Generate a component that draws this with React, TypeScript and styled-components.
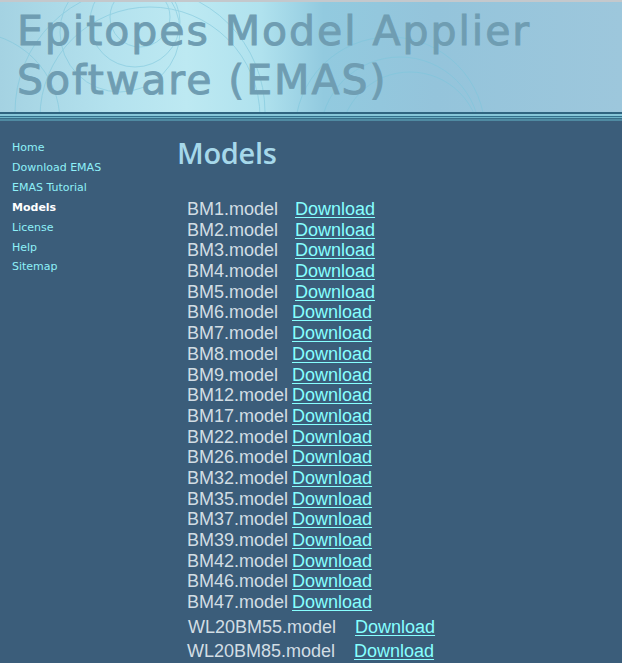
import { createGlobalStyle } from 'styled-components';
import styled from 'styled-components';

const GlobalStyle = createGlobalStyle`
  html, body {
    margin: 0;
    padding: 0;
    background: #3b5d7a;
  }
  body {
    font-family: "Liberation Sans", Arial, sans-serif;
  }
`;

const Page = styled.div`
  width: 622px;
  min-height: 663px;
  background: #3b5d7a;
  overflow: hidden;
`;

const TopEdge = styled.div`
  height: 2px;
  background: #c4c8cc;
`;

const Header = styled.header`
  position: relative;
  height: 110px;
  overflow: hidden;
  background: linear-gradient(
    90deg,
    #a4d2e2 0%,
    #b4e2ee 18%,
    #bde9f2 30%,
    #b0e2ee 42%,
    #92cadf 52%,
    #94c4db 70%,
    #9dc7dc 100%
  );
`;

const Swirls = styled.svg`
  position: absolute;
  inset: 0;
`;

const Title = styled.h1`
  position: relative;
  margin: 0;
  padding: 5px 0 0 17px;
  font-family: "DejaVu Sans", Verdana, sans-serif;
  font-weight: normal;
  font-size: 41px;
  line-height: 49px;
  letter-spacing: 1.95px;
  color: #6f9db2;
  -webkit-text-stroke: 0.9px #6f9db2;
`;

const Stripes = styled.div`
  height: 9px;
  background: linear-gradient(
    180deg,
    #2f6480 0px,
    #2f6480 2px,
    #86c6d8 2px,
    #86c6d8 4px,
    #33708c 4px,
    #33708c 5px,
    #6eb4c8 5px,
    #6eb4c8 6px,
    #3a6e88 6px,
    #3a6e88 7px,
    #4f8aa2 7px,
    #4f8aa2 9px
  );
`;

const Body = styled.div`
  display: flex;
`;

const Nav = styled.nav`
  width: 165px;
  padding: 17px 0 0 12px;
  display: flex;
  flex-direction: column;
`;

const NavLink = styled.a<{ $current?: boolean }>`
  font-family: "DejaVu Sans", Verdana, sans-serif;
  font-size: 11px;
  line-height: 19.9px;
  text-decoration: none;
  color: ${(p) => (p.$current ? '#ffffff' : '#8ef0f8')};
  font-weight: ${(p) => (p.$current ? 'bold' : 'normal')};
`;

const Main = styled.main`
  padding-top: 15px;
`;

const Heading = styled.h2`
  margin: 0 0 29px 0;
  font-family: "Open Sans", sans-serif;
  font-weight: 600;
  font-size: 29px;
  line-height: 34px;
  letter-spacing: -0.3px;
  color: #a6d8ea;
`;

const Group = styled.div<{ $rowHeight: number; $top?: number }>`
  display: flex;
  flex-direction: column;
  margin-top: ${(p) => p.$top ?? 0}px;

  & > div {
    height: ${(p) => p.$rowHeight}px;
  }
`;

const Row = styled.div<{ $nameWidth: number; $indent: number }>`
  display: grid;
  grid-template-columns: ${(p) => p.$nameWidth}px auto;
  padding-left: ${(p) => p.$indent}px;
  font-size: 18px;
  line-height: 20.7px;
  white-space: nowrap;
`;

const Name = styled.span`
  color: #d2dde4;
`;

const Download = styled.a`
  color: #86ffff;
  text-decoration: underline;
  text-underline-offset: 2px;
`;

const groups: { rowHeight: number; top?: number; rows: [string, number, number][] }[] = [
  {
    rowHeight: 20.7,
    rows: [
      ['BM1.model', 108, 10],
      ['BM2.model', 108, 10],
      ['BM3.model', 108, 10],
      ['BM4.model', 108, 10],
      ['BM5.model', 108, 10],
    ],
  },
  {
    rowHeight: 20.7,
    rows: ['BM6', 'BM7', 'BM8', 'BM9', 'BM12', 'BM17', 'BM22', 'BM26', 'BM32', 'BM35', 'BM37', 'BM39', 'BM42', 'BM46', 'BM47'].map(
      (n) => [`${n}.model`, 105, 10] as [string, number, number],
    ),
  },
  {
    rowHeight: 23.5,
    top: 4.5,
    rows: [
      ['WL20BM55.model', 167, 11],
      ['WL20BM85.model', 167, 10],
    ],
  },
];

const navItems = ['Home', 'Download EMAS', 'EMAS Tutorial', 'Models', 'License', 'Help', 'Sitemap'];

export default function App() {
  return (
    <Page>
      <GlobalStyle />
      <TopEdge />
      <Header>
        <Swirls width="622" height="110" viewBox="0 0 622 110">
          <g fill="none" stroke="#7cc6dc" strokeWidth="1" opacity="0.55">
            <circle cx="140" cy="110" r="125" />
            <circle cx="150" cy="115" r="110" />
            <circle cx="120" cy="30" r="60" />
            <circle cx="135" cy="20" r="45" />
            <circle cx="140" cy="15" r="30" />
            <circle cx="390" cy="130" r="95" />
            <circle cx="400" cy="135" r="80" />
            <circle cx="410" cy="140" r="70" />
            <circle cx="-30" cy="120" r="90" />
          </g>
        </Swirls>
        <Title>
          Epitopes Model Applier
          <br />
          Software (EMAS)
        </Title>
      </Header>
      <Stripes />
      <Body>
        <Nav>
          {navItems.map((item) => (
            <NavLink key={item} href="#" $current={item === 'Models'}>
              {item}
            </NavLink>
          ))}
        </Nav>
        <Main>
          <Heading>Models</Heading>
          {groups.map((g, gi) => (
            <Group key={gi} $rowHeight={g.rowHeight} $top={g.top}>
              {g.rows.map(([name, width, indent]) => (
                <Row key={name} $nameWidth={width} $indent={indent}>
                  <Name>{name}</Name>
                  <Download href="#">Download</Download>
                </Row>
              ))}
            </Group>
          ))}
        </Main>
      </Body>
    </Page>
  );
}
